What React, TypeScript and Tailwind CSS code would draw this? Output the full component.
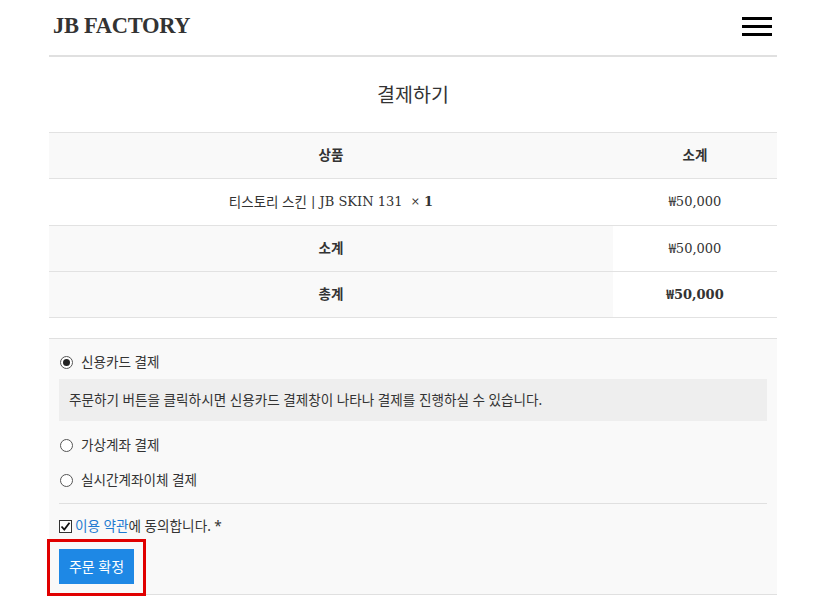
import React from "react";

const sans = { fontFamily: '"Noto Sans", "Noto Sans CJK KR", sans-serif' };
const serif = { fontFamily: '"Liberation Serif", "Noto Sans CJK KR", serif' };
const dserif = { fontFamily: '"DejaVu Serif", "Noto Sans CJK KR", serif' };

function Radio({ checked }: { checked?: boolean }) {
  return (
    <span className="w-[13px] h-[13px] rounded-full border border-[#555] bg-white flex items-center justify-center shrink-0">
      {checked && <span className="w-[7px] h-[7px] rounded-full bg-[#222]" />}
    </span>
  );
}

export default function App() {
  return (
    <div className="w-[827px] h-[606px] bg-white overflow-hidden text-[#333]" style={sans}>
      <div className="w-[728px] ml-[49px]">
        <header className="h-[57px] flex items-center justify-between border-b-2 border-[#e0e0e0] pb-[4px]">
          <div className="pl-[4px] text-[22.5px] font-bold tracking-[-0.3px] text-[#333]" style={serif}>
            JB FACTORY
          </div>
          <div className="flex flex-col gap-[5px] mr-[5px] mt-[2px]">
            <span className="block w-[30px] h-[3px] bg-black" />
            <span className="block w-[30px] h-[3px] bg-black" />
            <span className="block w-[30px] h-[3px] bg-black" />
          </div>
        </header>

        <h1 className="text-center text-[19.5px] font-normal text-[#333] mt-[22px] mb-[22px] leading-[31px]">
          결제하기
        </h1>

        <div className="text-[13px] border-t border-[#e2e2e2]" style={dserif}>
          <div className="flex h-[46px] bg-[#f9f9f9] border-b border-[#e2e2e2] font-bold text-[13.5px]" style={sans}>
            <div className="w-[564px] flex items-center justify-center">상품</div>
            <div className="flex-1 flex items-center justify-center">소계</div>
          </div>
          <div className="flex h-[47px] border-b border-[#e2e2e2]">
            <div className="w-[564px] flex items-center justify-center">
              <span style={sans} className="text-[13.5px]">티스토리 스킨</span>&nbsp;|&nbsp;JB SKIN 131&nbsp;&nbsp;<span className="text-[11px]">×</span>&nbsp;<b>1</b>
            </div>
            <div className="flex-1 flex items-center justify-center">₩50,000</div>
          </div>
          <div className="flex h-[46px] border-b border-[#e2e2e2]">
            <div className="w-[564px] bg-[#f9f9f9] flex items-center justify-center font-bold text-[13.5px]" style={sans}>소계</div>
            <div className="flex-1 flex items-center justify-center">₩50,000</div>
          </div>
          <div className="flex h-[46px] border-b border-[#e2e2e2]">
            <div className="w-[564px] bg-[#f9f9f9] flex items-center justify-center font-bold text-[13.5px]" style={sans}>총계</div>
            <div className="flex-1 flex items-center justify-center font-bold">₩50,000</div>
          </div>
        </div>

        <section className="mt-[20px] bg-[#f9f9f9] border-t border-b border-[#e0e0e0] px-[10px] pt-[11px] pb-[10px] text-[13.6px] text-[#333]">
          <label className="flex items-center h-[24px] gap-[8px] pl-[1px]">
            <Radio checked />
            <span>신용카드 결제</span>
          </label>
          <div className="mt-[5px] h-[42px] bg-[#eeeeee] flex items-center px-[10px]">
            주문하기 버튼을 클릭하시면 신용카드 결제창이 나타나 결제를 진행하실 수 있습니다.
          </div>
          <label className="flex items-center h-[24px] gap-[8px] pl-[1px] mt-[12px]">
            <Radio />
            <span>가상계좌 결제</span>
          </label>
          <label className="flex items-center h-[24px] gap-[8px] pl-[1px] mt-[11px]">
            <Radio />
            <span>실시간계좌이체 결제</span>
          </label>
          <div className="mt-[11px] border-t border-[#e0e0e0]" />
          <div className="flex items-center h-[24px] mt-[10px] gap-[3px]">
            <span className="w-[13px] h-[13px] border border-[#333] bg-white flex items-center justify-center">
              <svg width="11" height="11" viewBox="0 0 11 11">
                <path d="M1.5 5.5 L4.3 8.5 L9.5 1.8" fill="none" stroke="#111" strokeWidth="1.8" />
              </svg>
            </span>
            <span>
              <span className="text-[#1e7ad0]">이용 약관</span>에 동의합니다. *
            </span>
          </div>
          <div className="mt-[11px] relative w-fit">
            <button className="h-[35px] w-[75px] bg-[#1e88e5] text-white text-[14px] flex items-center justify-center">
              주문 확정
            </button>
            <div className="absolute left-[-12px] top-[-10px] w-[99px] h-[57px] border-[3px] border-[#e00000]" />
          </div>
        </section>
      </div>
    </div>
  );
}
